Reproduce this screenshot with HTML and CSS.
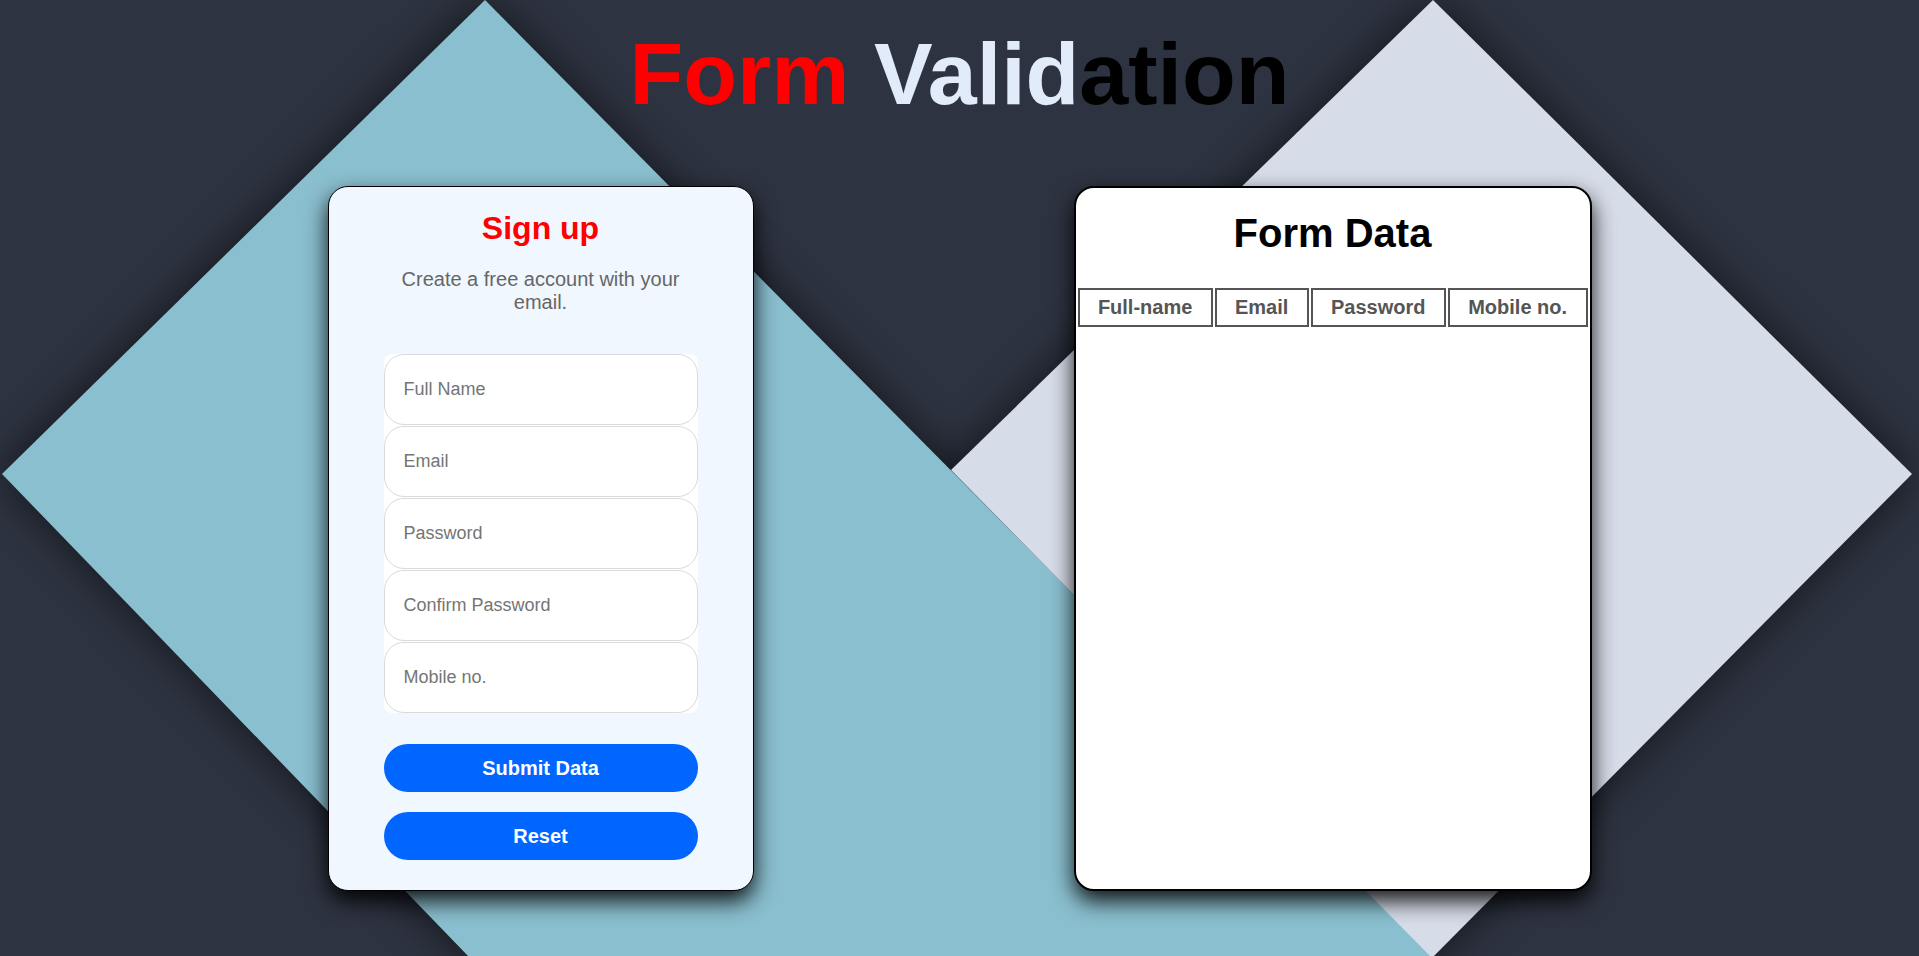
FILE: index.html
```html
<!DOCTYPE html>
<html lang="en">
<head>
<meta charset="utf-8">
<title>Form Validation</title>
<link rel="stylesheet" href="styles.css">
</head>
<body>
<svg class="backdrop" viewBox="0 0 1919 956" preserveAspectRatio="none" aria-hidden="true">
  <defs>
    <filter id="shade" x="-20%" y="-20%" width="140%" height="140%">
      <feGaussianBlur stdDeviation="22"/>
    </filter>
  </defs>
  <g class="shadow" filter="url(#shade)">
    <polygon points="485,0 1434,958 470,958 2,474"/>
    <polygon points="1433,0 1912,474 1432,958 951,470"/>
  </g>
  <polygon class="shape-blue" points="485,0 1434,958 470,958 2,474"/>
  <polygon class="shape-gray" points="1433,0 1912,474 1432,958 951,470"/>
</svg>

<div class="page">
  <h1 class="title"><span class="t-red">Form </span><span class="t-light">Valid</span><span class="t-dark">ation</span></h1>

  <div class="cards">
    <section class="card signup">
      <h2 class="signup-title">Sign up</h2>
      <p class="signup-sub">Create a free account with your email.</p>
      <form class="signup-form">
        <div class="fields">
          <input class="field" type="text" placeholder="Full Name">
          <input class="field" type="email" placeholder="Email">
          <input class="field" type="password" placeholder="Password">
          <input class="field" type="password" placeholder="Confirm Password">
          <input class="field" type="text" placeholder="Mobile no.">
        </div>
        <button class="btn btn-submit" type="button">Submit Data</button>
        <button class="btn btn-reset" type="button">Reset</button>
      </form>
    </section>

    <section class="card data">
      <h2 class="data-title">Form Data</h2>
      <table class="data-table">
        <thead>
          <tr>
            <th>Full-name</th>
            <th>Email</th>
            <th>Password</th>
            <th>Mobile no.</th>
          </tr>
        </thead>
      </table>
    </section>
  </div>
</div>
</body>
</html>
```

FILE: styles.css
```css
* {
  box-sizing: border-box;
}

html, body {
  margin: 0;
  height: 100%;
}

body {
  background: #2d3340;
  font-family: "Liberation Sans", Arial, sans-serif;
  overflow: hidden;
  position: relative;
}

.backdrop {
  position: absolute;
  inset: 0;
  width: 100%;
  height: 100%;
  z-index: 0;
  display: block;
}

.shadow {
  fill: #000;
  opacity: 0.6;
}

.shape-blue {
  fill: #8abfcf;
}

.shape-gray {
  fill: #d6dce8;
}

.page {
  position: relative;
  z-index: 1;
  padding-top: 30px;
}

.title {
  margin: 0;
  height: 88px;
  font-size: 88px;
  line-height: 88px;
  font-weight: 700;
  text-align: center;
  white-space: nowrap;
}

.t-red { color: #ff0000; }
.t-light { color: #e1ebf9; }
.t-dark { color: #000000; }

.cards {
  margin-top: 68px;
  display: flex;
  justify-content: center;
  align-items: stretch;
  gap: 320px;
}

.card {
  border-radius: 20px;
  box-shadow: 0 10px 22px rgba(0, 0, 0, 0.9);
}

.signup {
  width: 426px;
  background: #f0f7ff;
  border: 1px solid #000;
  padding: 23px 55px 30px;
  text-align: center;
}

.signup-title {
  margin: 0;
  font-size: 32px;
  font-weight: 700;
  color: #ff0000;
  line-height: normal;
}

.signup-sub {
  margin: 21px 0 0;
  font-size: 20px;
  line-height: normal;
  color: #666666;
}

.signup-form {
  margin: 40px 0 0;
  display: flex;
  flex-direction: column;
}

.fields {
  background: #ffffff;
  border-radius: 8px;
  display: flex;
  flex-direction: column;
  gap: 1px;
}

.field {
  display: block;
  width: 100%;
  height: 71px;
  border: 1px solid #dadada;
  border-radius: 20px;
  padding: 0 19px;
  font-family: "Liberation Sans", Arial, sans-serif;
  font-size: 18px;
  color: #333;
  background: #ffffff;
  outline: none;
}

.field::placeholder {
  color: #757575;
}

.btn {
  display: block;
  width: 100%;
  height: 48px;
  border: none;
  border-radius: 24px;
  background: #0066ff;
  color: #ffffff;
  font-family: "Liberation Sans", Arial, sans-serif;
  font-size: 20px;
  font-weight: 700;
  cursor: pointer;
}

.btn-submit {
  margin-top: 31px;
}

.btn-reset {
  margin-top: 20px;
}

.data {
  width: 518px;
  background: #ffffff;
  border: 2px solid #000;
  padding: 0;
}

.data-title {
  margin: 23px 0 0;
  font-size: 40px;
  font-weight: 700;
  color: #000;
  text-align: center;
  line-height: normal;
}

.data-table {
  margin-top: 30px;
  width: 100%;
  border-collapse: separate;
  border-spacing: 2px;
}

.data-table th {
  border: 2px solid #555555;
  color: #555555;
  font-size: 20px;
  font-weight: 700;
  padding: 6px 18px;
  white-space: nowrap;
}
```
